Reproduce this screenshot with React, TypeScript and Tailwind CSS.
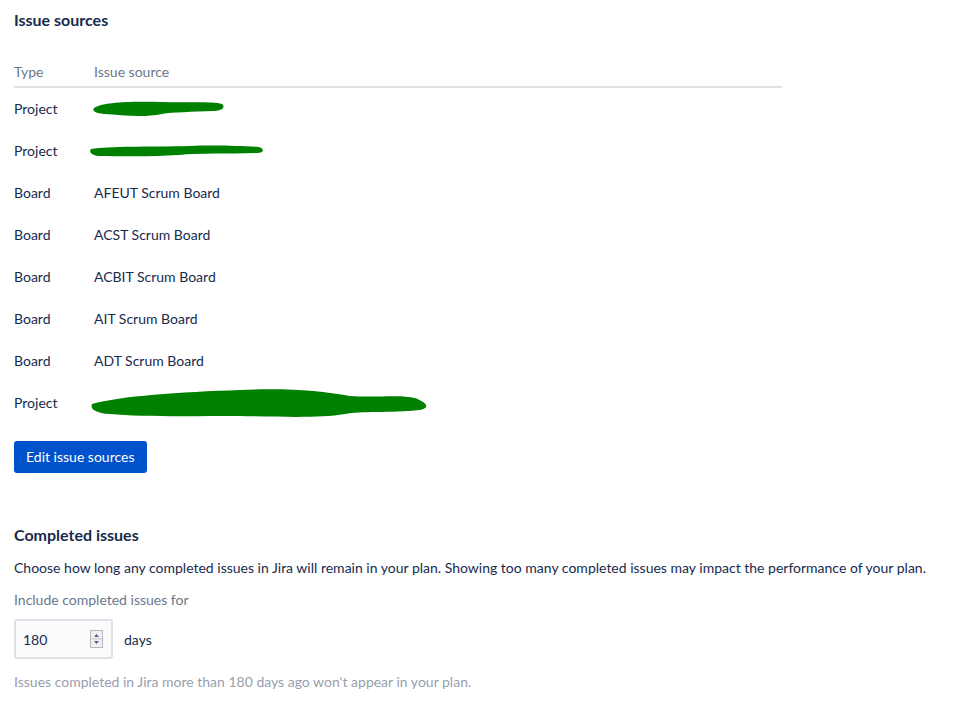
import React from 'react';

const rows = [
  { type: 'Project', source: null, blot: 1 },
  { type: 'Project', source: null, blot: 2 },
  { type: 'Board', source: 'AFEUT Scrum Board' },
  { type: 'Board', source: 'ACST Scrum Board' },
  { type: 'Board', source: 'ACBIT Scrum Board' },
  { type: 'Board', source: 'AIT Scrum Board' },
  { type: 'Board', source: 'ADT Scrum Board' },
  { type: 'Project', source: null, blot: 3 },
];

// redaction scribbles over the project names
const Blot: React.FC<{ kind: number }> = ({ kind }) => {
  if (kind === 1) {
    return (
      <svg width="134" height="22" viewBox="0 0 134 22" className="-ml-[2px]">
        <path d="M2 10 C10 4, 40 3, 70 4 C95 5, 120 3, 130 6 C134 9, 130 13, 122 13 C100 14, 80 14, 70 16 C50 20, 30 17, 12 16 C2 15, 0 12, 2 10 Z" fill="#008000" />
      </svg>
    );
  }
  if (kind === 2) {
    return (
      <svg width="176" height="16" viewBox="0 0 176 16" className="-ml-[5px]">
        <path d="M2 6 C20 3, 60 4, 100 3 C130 2, 150 3, 170 4 C176 6, 175 10, 168 10 C140 11, 110 10, 90 12 C60 14, 30 13, 10 13 C1 12, 0 8, 2 6 Z" fill="#008000" />
      </svg>
    );
  }
  return (
    <svg width="340" height="34" viewBox="0 0 340 34" className="-ml-[4px]">
      <path d="M2 18 C30 10, 90 6, 150 4 C200 2, 230 5, 260 10 C285 12, 310 8, 325 12 C338 17, 340 22, 330 24 C300 27, 270 25, 255 28 C230 32, 200 31, 150 30 C100 30, 50 31, 20 28 C4 27, 0 22, 2 18 Z" fill="#008000" />
    </svg>
  );
};

const App: React.FC = () => {
  return (
    <div className="min-h-screen bg-white text-[14px] text-[#172B4D] px-[14px] pt-[10px]" style={{ fontFamily: 'Lato, "Liberation Sans", sans-serif' }}>
      {/* Issue sources */}
      <h2 className="font-bold text-[16px] leading-[20px]">Issue sources</h2>

      <div className="w-[768px] mt-[34px]">
        <div className="flex h-[24px] items-start border-b-2 border-[#DFE1E6] text-[#6B778C] leading-[16px]">
          <div className="w-[80px]">Type</div>
          <div>Issue source</div>
        </div>
        {rows.map((row, i) => (
          <div key={i} className="flex items-center h-[42px] leading-[20px]">
            <div className="w-[80px]">{row.type}</div>
            <div>{row.source ? row.source : <Blot kind={row.blot as number} />}</div>
          </div>
        ))}
      </div>

      <button className="mt-[17px] h-[32px] px-[12px] bg-[#0052CC] text-white rounded-[3px] leading-[32px]">
        Edit issue sources
      </button>

      {/* Completed issues */}
      <h2 className="font-bold text-[16px] leading-[20px] mt-[52px]">Completed issues</h2>
      <p className="mt-[13px] leading-[20px]">
        Choose how long any completed issues in Jira will remain in your plan. Showing too many completed issues may impact the performance of your plan.
      </p>
      <div className="mt-[14px] text-[#6B778C] leading-[16px]">Include completed issues for</div>
      <div className="flex items-center mt-[11px]">
        <div className="w-[99px] h-[40px] bg-[#FAFBFC] border-2 border-[#DFE1E6] rounded-[3px] flex items-center pl-[7px] pr-[8px]">
          <span className="flex-1">180</span>
          <svg width="13" height="18" viewBox="0 0 13 18">
            <rect x="0.5" y="0.5" width="12" height="17" fill="#F0F0F0" stroke="#B9B9B9" />
            <line x1="1" y1="9" x2="12" y2="9" stroke="#C8C8C8" />
            <path d="M4 7 L6.5 4 L9 7 Z" fill="#5A5A8C" />
            <path d="M4 11 L6.5 14 L9 11 Z" fill="#5A5A8C" />
          </svg>
        </div>
        <span className="ml-[11px]">days</span>
      </div>
      <div className="mt-[15px] text-[#97A0AF] text-[14px] leading-[16px]">
        Issues completed in Jira more than 180 days ago won't appear in your plan.
      </div>
    </div>
  );
};

export default App;
